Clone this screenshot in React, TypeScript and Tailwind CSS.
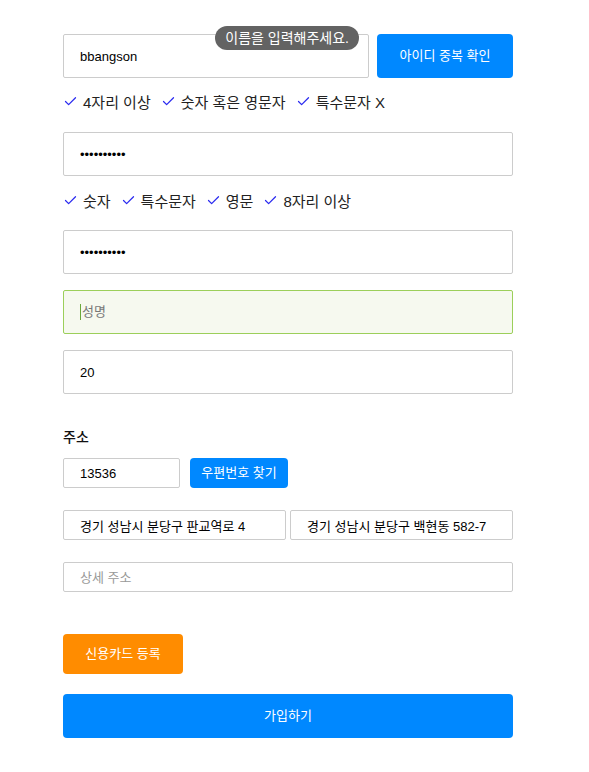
import React from 'react';
import { Check } from 'lucide-react';

const font = { fontFamily: '"Liberation Sans", "Noto Sans CJK KR", sans-serif' };

const inputBase =
  'w-full h-11 border border-[#cccccc] rounded-[2px] px-4 text-[13px] text-black outline-none bg-white';
const smallInput =
  'h-[30px] border border-[#cccccc] rounded-[2px] px-4 text-[13px] text-black outline-none bg-white';

const Rule: React.FC<{ label: string }> = ({ label }) => (
  <span className="flex items-center gap-[5px] text-[15px] text-[#222]">
    <Check size={15} strokeWidth={2} className="text-[#2b2bf0] -mt-[3px]" />
    {label}
  </span>
);

export default function App() {
  return (
    <div className="min-h-screen bg-white" style={font}>
      <div className="w-[450px] ml-[63px] pt-[34px] flex flex-col">
        {/* 아이디 */}
        <div className="flex gap-2">
          <div className="relative flex-1">
            <input className={inputBase} defaultValue="bbangson" />
            <div className="absolute right-[10px] top-[-8px] h-6 px-[10px] rounded-full bg-[#636363] text-white text-[14px] flex items-center">
              이름을 입력해주세요.
            </div>
          </div>
          <button className="w-[136px] h-11 rounded-[4px] bg-[#0088ff] text-white text-[13px]">
            아이디 중복 확인
          </button>
        </div>
        <div className="flex gap-[10px] h-5 mt-[15px] mb-[19px]">
          <Rule label="4자리 이상" />
          <Rule label="숫자 혹은 영문자" />
          <Rule label="특수문자 X" />
        </div>

        {/* 비밀번호 */}
        <input type="password" className={`${inputBase} text-[12px]`} defaultValue="0123456789" />
        <div className="flex gap-[10px] h-5 mt-[16px] mb-[18px]">
          <Rule label="숫자" />
          <Rule label="특수문자" />
          <Rule label="영문" />
          <Rule label="8자리 이상" />
        </div>
        <input type="password" className={`${inputBase} text-[12px]`} defaultValue="0123456789" />

        {/* 성명 */}
        <div className="mt-4 w-full h-11 border border-[#9ccf5a] rounded-[2px] bg-[#f6f9ef] px-4 flex items-center text-[13px] text-[#777]">
          <span className="w-px h-4 bg-[#6aa83a] mr-px" />
          성명
        </div>

        <input className={`${inputBase} mt-4`} defaultValue="20" />

        {/* 주소 */}
        <div className="mt-[33px] h-5 text-[14px] font-medium text-[#111] flex items-center">주소</div>
        <div className="flex gap-[10px] mt-[11px]">
          <input className={`${smallInput} w-[117px]`} defaultValue="13536" />
          <button className="w-[98px] h-[30px] rounded-[4px] bg-[#0088ff] text-white text-[13px]">
            우편번호 찾기
          </button>
        </div>
        <div className="flex gap-[4px] mt-[22px]">
          <input className={`${smallInput} flex-1 min-w-0`} defaultValue="경기 성남시 분당구 판교역로 4" />
          <input className={`${smallInput} flex-1 min-w-0`} defaultValue="경기 성남시 분당구 백현동 582-7" />
        </div>
        <input
          className={`${smallInput} w-full mt-[22px] placeholder:text-[#999]`}
          placeholder="상세 주소"
        />

        <button className="mt-[42px] w-[120px] h-10 rounded-[4px] bg-[#ff8c00] text-white text-[13px]">
          신용카드 등록
        </button>
        <button className="mt-5 w-full h-11 rounded-[4px] bg-[#0088ff] text-white text-[13px]">
          가입하기
        </button>
      </div>
    </div>
  );
}
